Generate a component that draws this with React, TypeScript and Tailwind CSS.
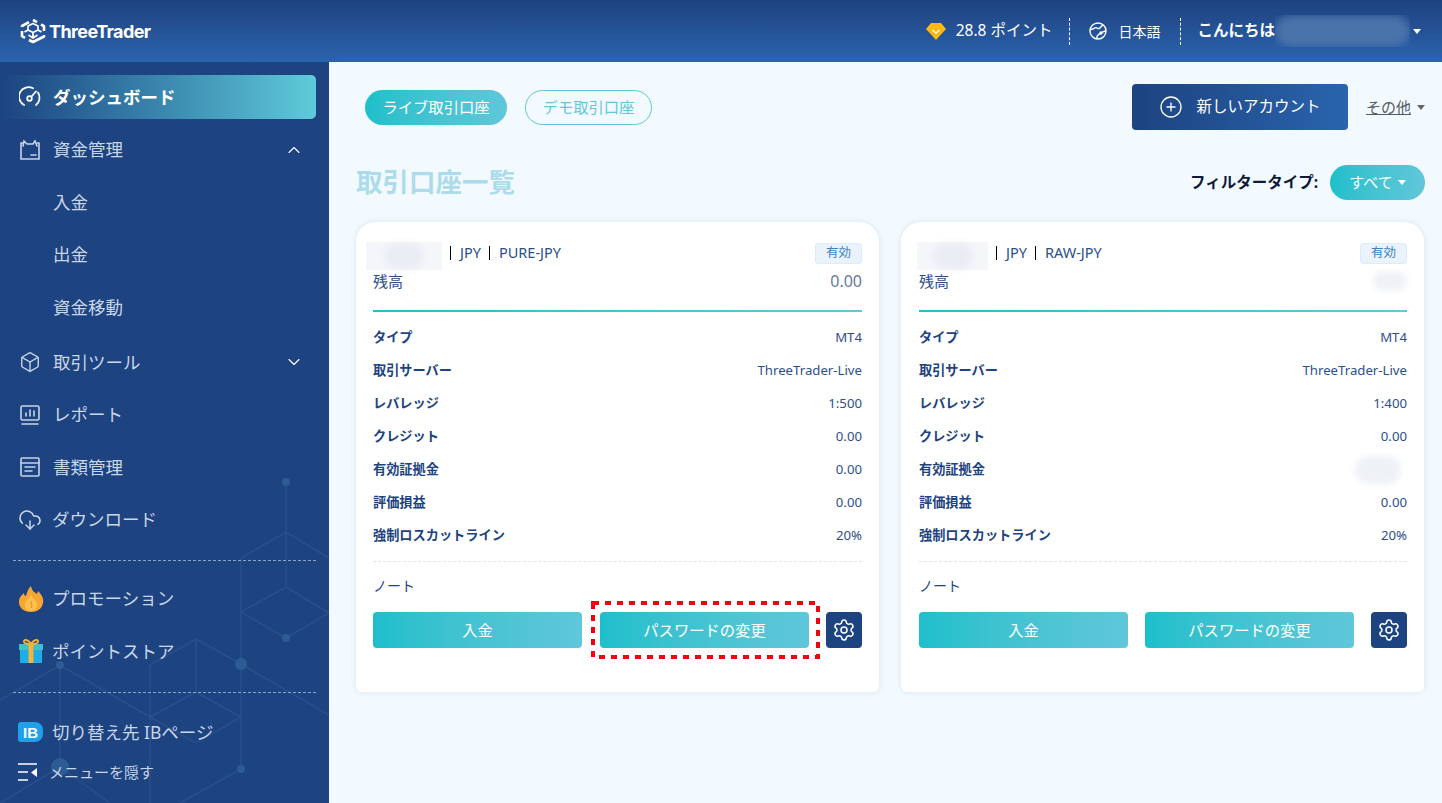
import React from 'react';
import { ChevronUp, ChevronDown, Box, CloudDownload, Settings, CirclePlus } from 'lucide-react';

const font = "font-['Noto_Sans','Noto_Sans_CJK_JP',sans-serif]";
const teal = 'bg-gradient-to-r from-[#1dbfcb] to-[#5fc7d9]';

const Logo = () => (
  <svg width="26" height="26" viewBox="0 0 26 26" fill="none" stroke="#fff" strokeWidth="2.6" strokeLinejoin="round">
    <path d="M13 2 L17 4.2 M21 6.5 L24 8.2 V13 M24 17 V18.5 L13 24 L9 22 M5 19.8 L2 18.2 V13 M2 9 V8 L9 4.2" />
    <path d="M8 8 L13 5.5 L18 8 V12 L13 14.5 L8 12 Z" strokeWidth="1.6" />
    <path d="M13 14.5 V20 M8 12 L4.5 14 M18 12 L21.5 14 M8.5 17 L13 20 L17.5 17" strokeWidth="1.8" />
  </svg>
);

const Gauge = () => (
  <svg width="22" height="22" viewBox="0 0 22 22" fill="none" stroke="#fff" strokeWidth="1.8" strokeLinecap="round">
    <path d="M5 19 A9.3 9.3 0 0 1 14 2.3" />
    <path d="M19 6.5 A9.3 9.3 0 0 1 17 19" />
    <circle cx="10.5" cy="12.5" r="2.3" />
    <path d="M12.5 10.5 L17 5.5" />
  </svg>
);

const Wallet = () => (
  <svg width="22" height="22" viewBox="0 0 22 22" fill="none" stroke="#c5d3e6" strokeWidth="1.6" strokeLinecap="round">
    <path d="M4 4 H2 V20 H20 V4 H18" />
    <path d="M4 7 L5 2 L8 5 M8 5 H14 L16 2 L18 7" />
    <path d="M12 16 H17" />
  </svg>
);

const Report = () => (
  <svg width="22" height="22" viewBox="0 0 22 22" fill="none" stroke="#c5d3e6" strokeWidth="1.6" strokeLinecap="round">
    <rect x="2" y="2" width="18" height="14" rx="1.5" />
    <path d="M7 12 V9 M11 12 V6 M15 12 V7 M3 20 H19" />
  </svg>
);

const Doc = () => (
  <svg width="22" height="22" viewBox="0 0 22 22" fill="none" stroke="#c5d3e6" strokeWidth="1.6" strokeLinecap="round">
    <rect x="2" y="2" width="18" height="18" rx="1" />
    <path d="M2 7 H20 M6 11 H16 M6 15 H13" />
  </svg>
);

const Flame = () => (
  <svg width="26" height="28" viewBox="0 0 26 28">
    <path d="M13 1 C14 6 16 7 19 9 C19 8 20 7 20 6 C24 10 26 14 25 18 C24 24 19 27 13 27 C6 27 1 23 1 17 C1 12 4 10 6 8 C6 10 7 11 8 11 C9 7 10 4 13 1 Z" fill="#f9a531" />
    <path d="M13 9 C14 13 19 15 19 20 C19 24 16 26 13 26 C9 26 7 24 7 20 C7 15 12 14 13 9 Z" fill="#fcc04f" />
    <path d="M14 16 C11 18 16 20 13 23" stroke="#e58a1f" fill="none" strokeWidth="1" />
  </svg>
);

const Gift = () => (
  <svg width="26" height="24" viewBox="0 0 26 24">
    <rect x="2" y="9" width="22" height="15" fill="#1eaee6" />
    <rect x="1" y="5" width="24" height="6" fill="#3cc3c9" />
    <rect x="10.5" y="5" width="5" height="19" fill="#f8b23a" />
    <path d="M13 5 C10 0 5 0 6 3 C6.5 5 10 5 13 5 C16 5 19.5 5 20 3 C21 0 16 0 13 5 Z" fill="none" stroke="#f8b23a" strokeWidth="1.8" />
  </svg>
);

const IbBadge = () => (
  <div className="w-[25px] h-[20px] rounded-l-[3px] rounded-r-[8px] bg-[#1ea1ea] flex items-center justify-center text-white text-[15px] leading-none font-black font-['Liberation_Sans',sans-serif]">
    IB
  </div>
);

const Collapse = () => (
  <svg width="21" height="18" viewBox="0 0 21 18" stroke="#fff" strokeWidth="1.6" fill="none">
    <path d="M1 1 H20 M1 9 H11 M1 17 H11" />
    <path d="M20 5 V14 L14 9.5 Z" fill="#fff" stroke="none" />
  </svg>
);

const Diamond = () => (
  <svg width="20" height="17" viewBox="0 0 20 17">
    <path d="M5 0 H15 L20 6 L10 17 L0 6 Z" fill="#fcb814" />
    <path d="M6.5 7 L10 10 L13.5 7" stroke="#fff" strokeWidth="1.3" fill="none" />
  </svg>
);

const Globe = () => (
  <svg width="18" height="18" viewBox="0 0 18 18" fill="none" stroke="#fff" strokeWidth="1.4">
    <circle cx="9" cy="9" r="8" />
    <path d="M1.5 7 C4 9 6 4 8 6 C10 8 12 5 14 2.5" />
    <path d="M8 17 C7 13 10 12 12 11 C14 10 15 9 17 9" />
    <circle cx="12" cy="11" r="1" />
  </svg>
);

// faint hexagon network behind the sidebar
const SidebarPattern = () => (
  <svg className="absolute left-0 top-0 pointer-events-none" width="329" height="741" viewBox="0 62 329 741" fill="none" stroke="#28508c" strokeWidth="1.5">
    <path d="M286 482 V587 L241 612 L286 638 L329 613 L286 587" />
    <path d="M241 558 L286 532 L329 558 M241 558 V769" />
    <path d="M241 664 L329 715 M241 664 L196 639 L150 665 V803 M196 639 V692 L150 717 M196 692 L241 717 M150 717 L196 743 L241 717" />
    <path d="M0 700 L60 665 L150 717 M60 665 V767 L0 803 M60 767 L110 803 M241 769 L180 803" />
    <g fill="#2d5b94" stroke="none">
      <circle cx="286" cy="482" r="4" />
      <circle cx="286" cy="638" r="4" />
      <circle cx="241" cy="664" r="6" />
      <circle cx="241" cy="769" r="4" />
      <circle cx="60" cy="665" r="4" />
      <circle cx="60" cy="767" r="9" />
    </g>
  </svg>
);

const NavRow = ({ icon, label, right, active, sub, className }: { icon?: React.ReactNode; label: string; right?: React.ReactNode; active?: boolean; sub?: boolean; className?: string }) => (
  <div
    className={`relative flex items-center h-[44px] mb-[8.5px] pr-[13px] ${sub ? 'pl-[53px]' : 'pl-[19px]'} ${
      active ? 'rounded-r-[5px] bg-gradient-to-r from-[#1d4380] to-[#5fcbda] mr-[13px] text-white font-bold' : 'text-[#c9d6e8]'
    } ${className ?? ''}`}
  >
    {icon && <span className="w-[34px] flex items-center shrink-0">{icon}</span>}
    <span className="text-[17.5px] flex-1 whitespace-nowrap">{label}</span>
    {right}
  </div>
);

const Sidebar = () => (
  <aside className="relative w-[329px] shrink-0 bg-[#1d4380] pt-[13px] overflow-hidden">
    <SidebarPattern />
    <div className="relative">
      <NavRow active icon={<Gauge />} label="ダッシュボード" />
      <NavRow icon={<Wallet />} label="資金管理" right={<ChevronUp size={20} strokeWidth={1.3} className="mr-[12px] text-white" />} />
      <NavRow sub label="入金" />
      <NavRow sub label="出金" />
      <NavRow sub label="資金移動" />
      <NavRow className="mt-[11px]" icon={<Box size={22} strokeWidth={1.5} />} label="取引ツール" right={<ChevronDown size={20} strokeWidth={1.3} className="mr-[12px] text-white" />} />
      <NavRow icon={<Report />} label="レポート" />
      <NavRow icon={<Doc />} label="書類管理" />
      <NavRow className="!pl-[18px]" icon={<CloudDownload size={24} strokeWidth={1.5} />} label="ダウンロード" />
      <div className="mx-[13px] mt-[18px] border-t border-dashed border-[#8ea4c5]" />
      <div className="h-[16px]" />
      <NavRow className="!pl-[18px]" icon={<Flame />} label="プロモーション" />
      <NavRow className="!pl-[18px]" icon={<Gift />} label="ポイントストア" />
      <div className="mx-[13px] mt-[19px] border-t border-dashed border-[#8ea4c5]" />
      <div className="h-[17px]" />
      <NavRow className="!pl-[18px]" icon={<IbBadge />} label="切り替え先 IBページ" />
      <div className="flex items-center gap-[11px] pl-[17px] -mt-[2px] text-[15px] text-[#c9d6e8]">
        <Collapse />
        <span>メニューを隠す</span>
      </div>
    </div>
  </aside>
);

const Header = () => (
  <header className="h-[62px] shrink-0 bg-gradient-to-b from-[#1f4280] to-[#2a64ae] flex items-center justify-between pl-[20px] pr-[21px] text-white">
    <div className="flex items-center gap-[3px]">
      <Logo />
      <span className="text-[18px] font-bold font-['Inter',sans-serif] tracking-[-0.6px]">ThreeTrader</span>
    </div>
    <div className="flex items-center">
      <Diamond />
      <span className="ml-[10px] text-[15.5px] whitespace-nowrap">28.8 ポイント</span>
      <div className="ml-[17px] mr-[19px] h-[27px] border-l border-dashed border-white" />
      <span><Globe /></span>
      <span className="ml-[11px] text-[14px]">日本語</span>
      <div className="ml-[20px] mr-[16px] h-[27px] border-l border-dashed border-white" />
      <span className="text-[15.5px] font-bold whitespace-nowrap">こんにちは</span>
      <div className="w-[135px] h-[32px] overflow-hidden">
        <div className="w-full h-full rounded-[16px] bg-[#4a73ab] blur-[4px]" />
      </div>
      <div className="ml-[3px] w-0 h-0 border-x-[4px] border-x-transparent border-t-[5px] border-t-white" />
    </div>
  </header>
);

const Row = ({ label, value }: { label: string; value: React.ReactNode }) => (
  <div className="flex items-center justify-between h-[33px] text-[13.2px]">
    <span className="font-bold text-[#1d4380]">{label}</span>
    <span className="text-[#2c4f88]">{value}</span>
  </div>
);

const Blob = ({ className }: { className: string }) => <div className={`bg-[#eef1f6] blur-[3px] rounded-full ${className}`} />;

const AccountCard = ({ plan, leverage, hiddenBalance, marked }: { plan: string; leverage: string; hiddenBalance?: boolean; marked?: boolean }) => (
  <section className={`w-[523px] h-[470px] bg-white rounded-t-[20px] rounded-b-[6px] shadow-[0_0_6px_rgba(60,100,150,0.15)] pr-[17px] pt-[19px] ${marked ? 'pl-[17px]' : 'pl-[18px]'}`}>
    <div className="flex items-center h-[24px] text-[14.5px] text-[#2c4f88]">
      {marked ? (
        <div className="-ml-[7px] mt-[5px] w-[76px] h-[28px] shrink-0 bg-[#f5f6fa] flex items-center justify-center">
          <Blob className="w-[40px] h-[26px] !bg-[#e9edf3]" />
        </div>
      ) : (
        <div className="-ml-[2px] mt-[5px] w-[71px] h-[28px] shrink-0 bg-[#f5f6fa] flex items-center justify-center">
          <Blob className="w-[40px] h-[26px] !bg-[#e9edf3]" />
        </div>
      )}
      <span className="ml-[8px] border-l border-black h-[14px]" />
      <span className="ml-[9px]">JPY</span>
      <span className="ml-[8px] border-l border-black h-[14px]" />
      <span className="ml-[9px]">{plan}</span>
      <span className="ml-auto h-[21px] px-[10px] flex items-center rounded-[3px] bg-[#eaf3fb] border border-[#dcecfb] text-[#3b7fc0] text-[12.5px]">有効</span>
    </div>
    <div className="flex items-center justify-between h-[32px] text-[15px]">
      <span className="text-[#2c4f88]">残高</span>
      {hiddenBalance ? <Blob className="w-[34px] h-[18px]" /> : <span className="text-[#667a99] text-[16px]">0.00</span>}
    </div>
    <div className={`mt-[13px] mb-[9px] h-[2px] ${teal}`} />
    <Row label="タイプ" value="MT4" />
    <Row label="取引サーバー" value="ThreeTrader-Live" />
    <Row label="レバレッジ" value={leverage} />
    <Row label="クレジット" value="0.00" />
    <Row label="有効証拠金" value={hiddenBalance ? <Blob className="w-[46px] h-[28px] mr-[6px]" /> : '0.00'} />
    <Row label="評価損益" value="0.00" />
    <Row label="強制ロスカットライン" value="20%" />
    <div className="mt-[9px] border-t border-dashed border-[#e0e3e8]" />
    <div className="mt-[14px] text-[14px] text-[#1d4380] leading-[20px]">ノート</div>
    <div className="mt-[16px] flex items-center">
      <button className={`w-[209px] h-[36px] rounded-[4px] ${teal} text-white text-[15.3px]`}>入金</button>
      <div className={`relative ${marked ? 'ml-[18px]' : 'ml-[17px]'}`}>
        <button className={`w-[209px] h-[36px] rounded-[4px] ${teal} text-white text-[15.3px] block`}>パスワードの変更</button>
        {marked && (
          <svg className="absolute -left-[9px] -top-[11px]" width="229" height="58" viewBox="0 0 229 58" fill="none">
            <rect x="2" y="2" width="225" height="54" stroke="#f5000f" strokeWidth="4" strokeDasharray="6 6" />
          </svg>
        )}
      </div>
      <button className="ml-auto w-[36px] h-[36px] rounded-[4px] bg-[#1d4380] flex items-center justify-center text-white">
        <Settings size={24} strokeWidth={1.5} />
      </button>
    </div>
  </section>
);

const Main = () => (
  <main className="flex-1 bg-[#f3faff] pl-[27px] pr-[17px] pt-[22px] overflow-hidden">
    <div className="flex items-center h-[46px] pl-[9px]">
      <button className={`h-[35px] w-[142px] rounded-full ${teal} text-white text-[15.3px]`}>ライブ取引口座</button>
      <button className="ml-[18px] h-[35px] w-[127px] rounded-full border border-[#5fc7d9] text-[#5fc7d9] text-[15.3px]">デモ取引口座</button>
      <button className="ml-auto h-[46px] w-[216px] rounded-[4px] bg-gradient-to-r from-[#1d4380] to-[#2a64ae] text-white text-[15.5px] flex items-center justify-center gap-[13px]">
        <CirclePlus size={24} strokeWidth={1.3} />
        新しいアカウント
      </button>
      <span className="ml-[18px] text-[15px] text-[#555b66] underline">その他</span>
      <div className="ml-[6px] w-0 h-0 border-x-[4px] border-x-transparent border-t-[5px] border-t-[#666]" />
    </div>
    <div className="mt-[35px] flex items-center justify-between h-[35px]">
      <h1 className="text-[26.5px] font-bold text-[#acdcec]">取引口座一覧</h1>
      <div className="flex items-center">
        <span className="text-[15.5px] font-bold text-[#0f1a38]">フィルタータイプ:</span>
        <button className={`ml-[12px] h-[35px] w-[95px] rounded-full ${teal} text-white text-[15px] flex items-center justify-center gap-[5px]`}>
          すべて
          <span className="w-0 h-0 border-x-[4px] border-x-transparent border-t-[5px] border-t-white" />
        </button>
      </div>
    </div>
    <div className="mt-[22px] flex gap-[22px]">
      <AccountCard plan="PURE-JPY" leverage="1:500" marked />
      <AccountCard plan="RAW-JPY" leverage="1:400" hiddenBalance />
    </div>
  </main>
);

export default function App() {
  return (
    <div className={`h-screen flex flex-col overflow-hidden ${font}`}>
      <Header />
      <div className="flex flex-1 min-h-0">
        <Sidebar />
        <Main />
      </div>
    </div>
  );
}
